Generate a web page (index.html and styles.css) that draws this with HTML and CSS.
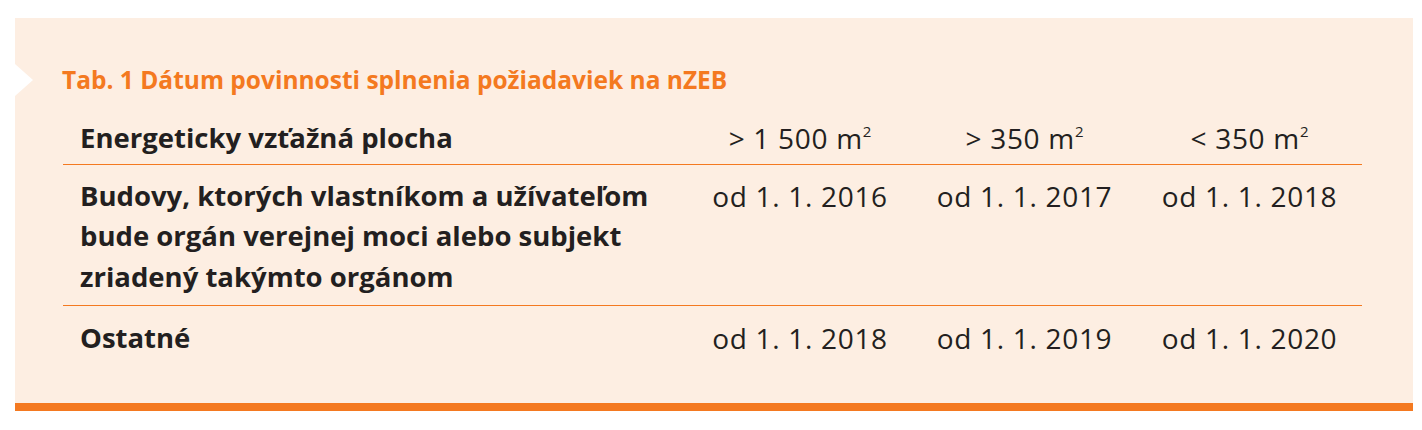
FILE: index.html
```html
<!DOCTYPE html>
<html lang="sk">
<head>
<meta charset="utf-8">
<title>Tab. 1</title>
<link rel="stylesheet" href="styles.css">
</head>
<body>
<div class="panel">
  <div class="notch"></div>
  <h2 class="title">Tab. 1 Dátum povinnosti splnenia požiadaviek na nZEB</h2>
  <div class="table">
    <div class="row head">
      <div class="cell label">Energeticky vzťažná plocha</div>
      <div class="cell num">&gt; 1 500 m<sup>2</sup></div>
      <div class="cell num">&gt; 350 m<sup>2</sup></div>
      <div class="cell num">&lt; 350 m<sup>2</sup></div>
    </div>
    <div class="row body1">
      <div class="cell label">Budovy, ktorých vlastníkom a užívateľom<br>bude orgán verejnej moci alebo subjekt<br>zriadený takýmto orgánom</div>
      <div class="cell num">od 1. 1. 2016</div>
      <div class="cell num">od 1. 1. 2017</div>
      <div class="cell num">od 1. 1. 2018</div>
    </div>
    <div class="row last">
      <div class="cell label">Ostatné</div>
      <div class="cell num">od 1. 1. 2018</div>
      <div class="cell num">od 1. 1. 2019</div>
      <div class="cell num">od 1. 1. 2020</div>
    </div>
  </div>
</div>
</body>
</html>
```

FILE: styles.css
```css
html, body {
  margin: 0;
  padding: 0;
  background: #ffffff;
}

body {
  font-family: "Open Sans", "Lato", "Liberation Sans", sans-serif;
  color: #231f20;
}

.panel {
  position: relative;
  margin: 18px 0 0 15px;
  width: 1398px;
  height: 385px;
  background: #fdeee2;
  border-bottom: 8px solid #f47920;
}

.notch {
  position: absolute;
  left: 0;
  top: 46px;
  width: 0;
  height: 0;
  border-left: 18px solid #ffffff;
  border-top: 16px solid transparent;
  border-bottom: 16px solid transparent;
}

.title {
  margin: 0;
  padding: 47px 0 0 47px;
  font-size: 24.5px;
  line-height: 30px;
  font-weight: 700;
  color: #f47920;
}

.table {
  margin: 13px 0 0 48px;
  width: 1299px;
}

.row {
  display: grid;
  grid-template-columns: 625px 224px 225px 225px;
  font-size: 27.5px;
  line-height: 40.5px;
}

.head {
  padding: 10px 0 5px;
  border-bottom: 1px solid #f47920;
}

.body1 {
  padding: 11px 0 8px;
  border-bottom: 1px solid #f47920;
}

.last {
  padding: 12px 0 0;
}

.label {
  padding: 0 0 0 17px;
  font-weight: 700;
  white-space: nowrap;
}

.num {
  text-align: center;
  font-weight: 400;
  font-size: 28px;
  letter-spacing: 0.7px;
}

sup {
  font-size: 15px;
  letter-spacing: 0;
  line-height: 0;
  vertical-align: 12px;
}
```
